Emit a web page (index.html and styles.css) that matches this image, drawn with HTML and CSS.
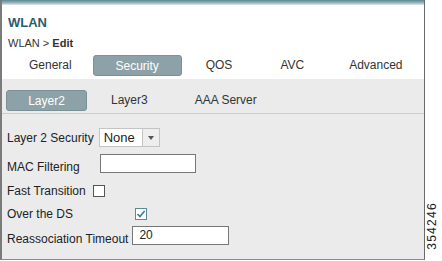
FILE: index.html
```html
<!DOCTYPE html>
<html lang="en">
<head>
  <meta charset="UTF-8">
  <title>WLAN Edit</title>
  <link rel="stylesheet" href="styles.css">
</head>
<body>
  <div class="panel">
    <div class="topbar"></div>
    <div class="head">
      <h1>WLAN</h1>
      <div class="crumb">WLAN &gt; <b>Edit</b></div>
      <ul class="tabs">
        <li class="tab-general">General</li>
        <li class="tab-security active">Security</li>
        <li class="tab-qos">QOS</li>
        <li class="tab-avc">AVC</li>
        <li class="tab-adv">Advanced</li>
      </ul>
    </div>
    <div class="body">
      <ul class="subtabs">
        <li class="sub-l2 active">Layer2</li>
        <li class="sub-l3">Layer3</li>
        <li class="sub-aaa">AAA Server</li>
      </ul>
      <div class="form">
        <div class="row row-sec">
          <span>Layer 2 Security</span>
          <div class="select"><span class="val">None</span><span class="arrow"></span></div>
        </div>
        <div class="row row-mac">
          <span class="low">MAC Filtering</span>
          <div class="input mac"></div>
        </div>
        <div class="row row-fast">
          <span>Fast Transition</span>
          <div class="check"></div>
        </div>
        <div class="row row-ds">
          <span>Over the DS</span>
          <div class="check">
            <svg width="10" height="10" viewBox="0 0 10 10"><path d="M1.5 5.2 L4 7.6 L8.6 2" fill="none" stroke="#3b7f96" stroke-width="1.6"/></svg>
          </div>
        </div>
        <div class="row row-re">
          <span class="low">Reassociation Timeout</span>
          <div class="input re">20</div>
        </div>
      </div>
    </div>
  </div>
  <div class="figno">354246</div>
</body>
</html>
```

FILE: styles.css
```css
* {
  margin: 0;
  padding: 0;
  box-sizing: border-box;
}

body {
  width: 442px;
  height: 261px;
  background: #ffffff;
  font-family: 'Liberation Sans', Arial, sans-serif;
  color: #222;
  position: relative;
  overflow: hidden;
}

.panel {
  width: 425px;
  height: 260px;
  display: flex;
  flex-direction: column;
  border-left: 2px solid #7b7b7b;
  border-right: 1px solid #6a6a6a;
  border-bottom: 1px solid #8a8a8a;
}

.topbar {
  height: 5px;
  background: linear-gradient(#5c8794, #9bb7bf 60%, #e4ecee);
}

.head {
  height: 74px;
  background: #fff;
  padding-left: 6px;
}

h1 {
  font-size: 13px;
  font-weight: bold;
  color: #2c5c6c;
  line-height: 15px;
  margin-top: 10px;
}

.crumb {
  font-size: 11px;
  line-height: 13px;
  margin-top: 7px;
  color: #333;
}

.tabs, .subtabs {
  list-style: none;
  display: flex;
  font-size: 12px;
  color: #333;
}

.tabs {
  margin-top: 5px;
  height: 21px;
  align-items: center;
}

.tabs li, .subtabs li {
  height: 21px;
  line-height: 20px;
}

.active {
  background: #8ca2a8;
  border: 1px solid #7a9196;
  border-radius: 3px;
  color: #fff;
  text-align: center;
}

.tab-general { margin-left: 21px; }
.tab-security { margin-left: 21px; width: 89px; }
.tab-qos { margin-left: 24px; }
.tab-avc { margin-left: 48px; }
.tab-adv { margin-left: 45px; }

.body {
  flex: 1;
  background: #ebebec;
  padding-top: 11px;
}

.subtabs {
  padding-left: 4px;
  padding-bottom: 2px;
  border-bottom: 1px solid #cdcdcd;
}

.sub-l2 { width: 81px; }
.sub-l3 { margin-left: 24px; }
.sub-aaa { margin-left: 47px; }

.form {
  padding-left: 5px;
  font-size: 12px;
  color: #222;
}

.row {
  display: flex;
  align-items: center;
}

.row .low {
  padding-top: 6px;
}

.row-sec { margin-top: 14px; height: 19px; }
.row-mac { margin-top: 7px; height: 19px; }
.row-fast { margin-top: 9px; height: 18px; }
.row-ds { margin-top: 5px; height: 18px; }
.row-re { margin-top: 3px; height: 19px; }

.select {
  margin-left: 5px;
  height: 19px;
  width: 61px;
  display: flex;
  background: #fff;
  border: 1px solid #c4c4c4;
}

.select .val {
  width: 43px;
  padding-left: 4px;
  line-height: 17px;
  font-size: 13px;
  border-right: 1px solid #c4c4c4;
}

.select .arrow {
  flex: 1;
  background: #eeeeee;
  position: relative;
}

.select .arrow::after {
  content: "";
  position: absolute;
  left: 5px;
  top: 7px;
  border-left: 3px solid transparent;
  border-right: 3px solid transparent;
  border-top: 4px solid #555;
}

.input {
  height: 19px;
  background: #fff;
  border: 1px solid #777;
  font-size: 12px;
  line-height: 17px;
  padding-left: 6px;
}

.mac {
  margin-left: 20px;
  width: 96px;
}

.re {
  margin-left: 4px;
  width: 97px;
}

.check {
  width: 12px;
  height: 12px;
  background: #fff;
  border: 1px solid #555;
  display: flex;
  align-items: center;
  justify-content: center;
}

.row-fast .check { margin-left: 7px; }
.row-ds .check { margin-left: 62px; border-color: #5a8a9a; }

.figno {
  position: absolute;
  left: 428px;
  top: 202px;
  font-size: 12px;
  line-height: 9px;
  letter-spacing: 1.3px;
  color: #222;
  writing-mode: vertical-rl;
  transform: rotate(180deg);
}
```
